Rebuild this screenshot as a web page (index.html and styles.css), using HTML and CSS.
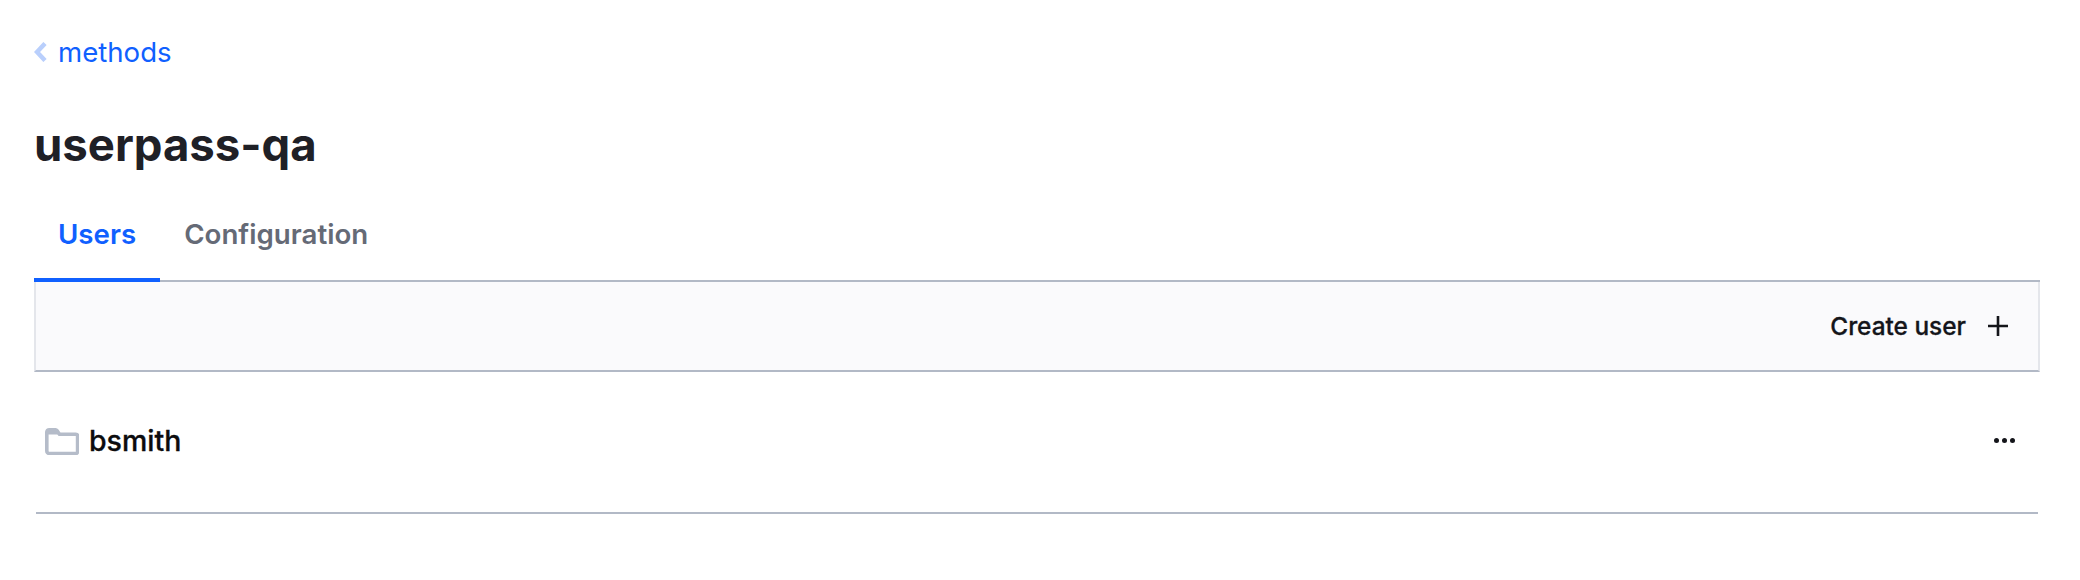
FILE: index.html
```html
<!DOCTYPE html>
<html lang="en">
<head>
    <meta charset="UTF-8">
    <title>userpass-qa</title>
    <link rel="stylesheet" href="styles.css">
</head>
<body>
    <div class="container">
        <!-- breadcrumb -->
        <nav class="breadcrumb">
            <svg class="chevron" width="13" height="20" viewBox="0 0 13 20"><path d="M11 1.500 3 10l8 8.500" fill="none" stroke="#b9cffc" stroke-width="4.500"/></svg>
            <a href="#">methods</a>
        </nav>

        <h1 class="title">userpass-qa</h1>

        <!-- tabs -->
        <div class="tabs">
            <a class="tab tab-active" href="#">Users</a>
            <a class="tab" href="#">Configuration</a>
        </div>

        <!-- toolbar -->
        <div class="toolbar">
            <a class="toolbar-link" href="#">
                Create user
                <svg width="20" height="20" viewBox="0 0 20 20"><path d="M10 0v20M0 10h20" fill="none" stroke="#14151a" stroke-width="2.600"/></svg>
            </a>
        </div>

        <!-- list -->
        <div class="list-item">
            <div class="item-name">
                <svg class="folder" width="34" height="28" viewBox="0 0 34 28"><path d="M1.800 5V24a2.500 2.500 0 0 0 2.500 2.500h26.500a1.800 1.800 0 0 0 1.800-1.800V9a1.800 1.800 0 0 0-1.800-1.800H14.500L12 3.600a2 2 0 0 0-1.500-.8H4.300A2.500 2.500 0 0 0 1.800 5Z" fill="none" stroke="#b5bcc9" stroke-width="3.600"/><path d="M2 2h10l3 5.500 H2Z" fill="#b5bcc9"/></svg>
                <span>bsmith</span>
            </div>
            <div class="dots"><i></i><i></i><i></i></div>
        </div>
    </div>
</body>
</html>
```

FILE: styles.css
```css
* {
    box-sizing: border-box;
    margin: 0;
    padding: 0;
}

body {
    background: #fff;
    font-family: 'Inter', sans-serif;
    color: #14151a;
}

a {
    text-decoration: none;
}

.container {
    padding: 34px 40px 0 34px;
}

/* breadcrumb */
.breadcrumb {
    display: flex;
    align-items: center;
    gap: 11px;
    height: 36px;
}

.breadcrumb a {
    color: #1060ff;
    font-size: 27.600px;
}

/* title */
.title {
    margin-top: 47px;
    font-size: 45.500px;
    line-height: 56px;
    font-weight: 700;
    color: #1f2026;
}

/* tabs */
.tabs {
    display: flex;
    margin-top: 16px;
    height: 93px;
    border-bottom: 2px solid #b2b9c6;
}

.tab {
    height: 93px;
    padding: 0 24px;
    display: flex;
    align-items: center;
    font-size: 27.700px;
    font-weight: 600;
    color: #656a76;
    border-bottom: 4px solid transparent;
}

.tab-active {
    color: #1060ff;
    border-bottom-color: #1060ff;
}

/* toolbar */
.toolbar {
    display: flex;
    justify-content: flex-end;
    align-items: center;
    height: 90px;
    padding-right: 30px;
    background: #fafafc;
    border-left: 2px solid #e4e6eb;
    border-right: 2px solid #e4e6eb;
    border-bottom: 2px solid #b2b9c6;
}

.toolbar-link {
    display: flex;
    align-items: center;
    gap: 22px;
    font-size: 24.400px;
    font-weight: 500;
    -webkit-text-stroke: 0.300px #14151a;
    color: #14151a;
}

/* list */
.list-item {
    display: flex;
    justify-content: space-between;
    align-items: center;
    height: 142px;
    margin: 0 2px;
    padding: 0 23px 3px 9px;
    border-bottom: 2px solid #b2b9c6;
}

.item-name {
    display: flex;
    align-items: center;
    gap: 10px;
    font-size: 28.500px;
    font-weight: 500;
    -webkit-text-stroke: 0.300px #0c0c0e;
    color: #0c0c0e;
}

.dots {
    display: flex;
    gap: 2.500px;
}

.dots i {
    display: block;
    width: 5.500px;
    height: 5.500px;
    border-radius: 50%;
    background: #14151a;
}
```
